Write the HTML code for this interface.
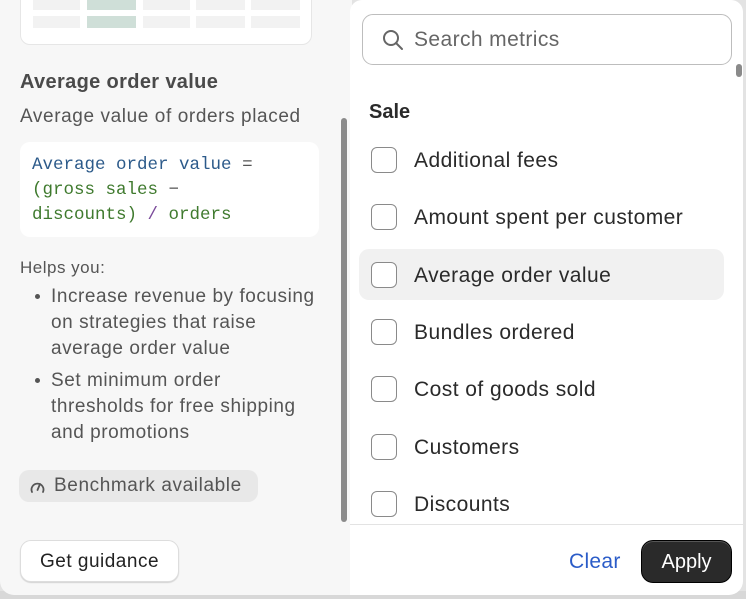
<!DOCTYPE html><html><head><style>
*{box-sizing:border-box;margin:0;padding:0}
body{width:746px;height:599px;overflow:hidden;background:#e3e3e3;font-family:"Liberation Sans",sans-serif;position:relative}
.a{position:absolute}
.left{left:0;top:0;width:352px;height:595px;background:#f7f7f7;border-radius:0 0 0 14px}
.right{left:350px;top:0;width:393px;height:595px;background:#fff;border-radius:12px 12px 14px 0}
.cb{position:absolute;left:371px;width:26px;height:26px;border:1.5px solid #8a8a8a;border-radius:6px;background:#fff}
.lbl{position:absolute;left:414px;font-size:21px;letter-spacing:.45px;color:#2a2a2a}
.b{position:absolute;left:35px;width:5px;height:5px;border-radius:50%;background:#555}
.bt{position:absolute;left:51px;font-size:19px;letter-spacing:.55px;color:#555;line-height:26px}
</style></head><body>
<div class="a" style="left:0;bottom:0;width:746px;height:8px;background:#d8d8d8"></div>
<div class="a left"></div>
<div class="a" style="left:20px;top:-10px;width:292px;height:55px;background:#fff;border:1px solid #e6e6e6;border-radius:10px"></div>
<div class="a" style="left:33px;top:0;width:47px;height:10px;background:#f2f2f2"></div>
<div class="a" style="left:33px;top:16px;width:47px;height:12px;background:#f2f2f2"></div>
<div class="a" style="left:87px;top:0;width:49px;height:10px;background:#cfdfd8"></div>
<div class="a" style="left:87px;top:16px;width:49px;height:12px;background:#cfdfd8"></div>
<div class="a" style="left:143px;top:0;width:47px;height:10px;background:#f2f2f2"></div>
<div class="a" style="left:143px;top:16px;width:47px;height:12px;background:#f2f2f2"></div>
<div class="a" style="left:196px;top:0;width:49px;height:10px;background:#f2f2f2"></div>
<div class="a" style="left:196px;top:16px;width:49px;height:12px;background:#f2f2f2"></div>
<div class="a" style="left:251px;top:0;width:49px;height:10px;background:#f2f2f2"></div>
<div class="a" style="left:251px;top:16px;width:49px;height:12px;background:#f2f2f2"></div>
<div class="a" style="left:20px;top:71px;font-size:20px;letter-spacing:.35px;font-weight:bold;color:#4a4a4a">Average order value</div>
<div class="a" style="left:20px;top:106px;font-size:19px;letter-spacing:.6px;color:#555">Average value of orders placed</div>
<div class="a" style="left:20px;top:142px;width:299px;height:95px;background:#fff;border-radius:10px"></div>
<div class="a" style="left:32px;top:153px;font-family:'Liberation Mono',monospace;font-size:17.5px;line-height:25px;color:#3f7a2e;white-space:pre"><span style="color:#2c5a8a">Average order value</span> <span style="color:#555">=</span>
(gross sales <span style="color:#555">−</span>
discounts) <span style="color:#7a4a9a">/</span> orders</div>
<div class="a" style="left:20px;top:258px;font-size:17px;letter-spacing:.5px;color:#555">Helps you:</div>
<div class="b" style="top:294px"></div><div class="bt" style="top:284px">Increase revenue by focusing<br>on strategies that raise<br>average order value</div>
<div class="b" style="top:378px"></div><div class="bt" style="top:368px">Set minimum order<br>thresholds for free shipping<br>and promotions</div>
<div class="a" style="left:19px;top:470px;width:239px;height:32px;background:#e8e8e8;border-radius:10px"></div>
<svg class="a" style="left:29px;top:478px" width="17" height="16" viewBox="0 0 17 16"><path d="M3 14A6 6 0 1 1 14 14" fill="none" stroke="#555" stroke-width="1.8" stroke-linecap="round"/><path d="M8.5 12L11 6" stroke="#555" stroke-width="1.8" stroke-linecap="round"/></svg>
<div class="a" style="left:54px;top:475px;font-size:19px;letter-spacing:.6px;color:#555">Benchmark available</div>
<div class="a" style="left:20px;top:540px;width:159px;height:42px;background:#fff;border:1px solid #ddd;border-radius:11px;box-shadow:0 1px 1px rgba(0,0,0,.15);font-size:19px;letter-spacing:.5px;color:#222;text-align:center;line-height:42px">Get guidance</div>
<div class="a" style="left:341px;top:118px;width:6px;height:404px;background:#8a8a8a;border-radius:3px"></div>
<div class="a right"></div>
<div class="a" style="left:362px;top:14px;width:370px;height:51px;border:1px solid #bdbdbd;border-radius:11px"></div>
<svg class="a" style="left:381px;top:28px" width="24" height="24" viewBox="0 0 24 24"><circle cx="10" cy="10" r="7" fill="none" stroke="#666" stroke-width="2"/><path d="M15 15L21 21" stroke="#666" stroke-width="2" stroke-linecap="round"/></svg>
<div class="a" style="left:414px;top:28px;font-size:21px;letter-spacing:.4px;color:#666">Search metrics</div>
<div class="a" style="left:736px;top:64px;width:6px;height:13px;background:#8a8a8a;border-radius:3px"></div>
<div class="a" style="left:369px;top:101px;font-size:20px;font-weight:bold;color:#2a2a2a">Sale</div>
<div class="a" style="left:359px;top:249px;width:365px;height:51px;background:#f1f1f1;border-radius:10px"></div>
<div class="cb" style="top:147px"></div><div class="lbl" style="top:149px">Additional fees</div>
<div class="cb" style="top:204px"></div><div class="lbl" style="top:206px">Amount spent per customer</div>
<div class="cb" style="top:262px"></div><div class="lbl" style="top:264px">Average order value</div>
<div class="cb" style="top:319px"></div><div class="lbl" style="top:321px">Bundles ordered</div>
<div class="cb" style="top:376px"></div><div class="lbl" style="top:378px">Cost of goods sold</div>
<div class="cb" style="top:434px"></div><div class="lbl" style="top:436px">Customers</div>
<div class="cb" style="top:491px"></div><div class="lbl" style="top:493px">Discounts</div>
<div class="a" style="left:350px;top:524px;width:393px;height:1px;background:#e3e3e3"></div>
<div class="a" style="left:569px;top:550px;font-size:21px;letter-spacing:.3px;color:#2b5cc8">Clear</div>
<div class="a" style="left:641px;top:540px;width:91px;height:43px;background:#2a2a2a;border:1.5px solid #000;border-radius:12px;color:#fff;font-size:20px;text-align:center;line-height:42px;box-shadow:inset 0 1px 0 #555">Apply</div>
</body></html>
